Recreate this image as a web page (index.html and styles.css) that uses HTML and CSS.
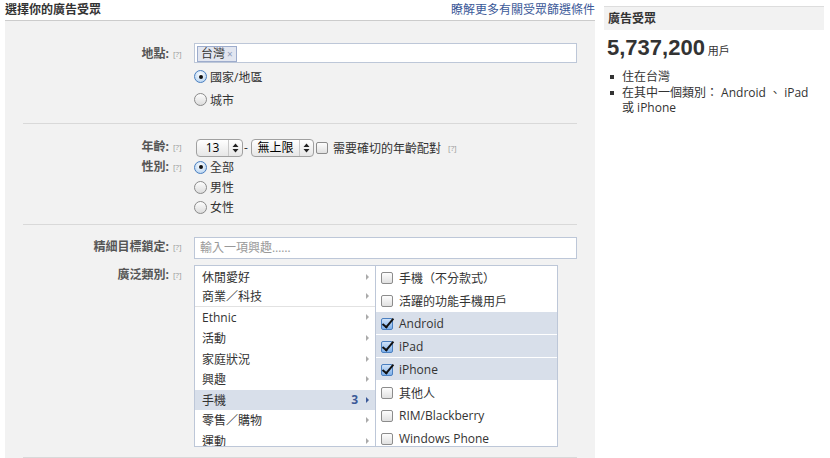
FILE: index.html
```html
<!DOCTYPE html>
<html lang="zh-Hant">
<head>
    <meta charset="UTF-8">
    <title>選擇你的廣告受眾</title>
    <link rel="stylesheet" href="styles.css">
</head>
<body>
    <div class="page">
        <!-- Targeting form -->
        <div class="main">
            <div class="main-head">
                <h2>選擇你的廣告受眾</h2>
                <a href="#">瞭解更多有關受眾篩選條件</a>
            </div>

            <div class="panel">
                <!-- Location -->
                <div class="section sec-location">
                    <div class="row">
                        <label class="label">地點:</label>
                        <span class="help">[?]</span>
                        <div class="control">
                            <div class="token-input">
                                <span class="token">台灣<span class="token-x">×</span></span>
                            </div>
                            <div class="radio-line"><span class="radio on"></span>國家/地區</div>
                            <div class="radio-line"><span class="radio"></span>城市</div>
                        </div>
                    </div>
                </div>

                <!-- Age / gender -->
                <div class="section sec-demo">
                    <div class="row row-age">
                        <label class="label">年齡:</label>
                        <span class="help">[?]</span>
                        <div class="control age-line">
                            <span class="select s-min">
                                <span class="select-val">13</span>
                                <span class="select-arrows">
                                    <svg width="7" height="10" viewBox="0 0 7 10"><path d="M3.5 0.5 L6.5 4 H0.5 Z M3.5 9.5 L6.5 6 H0.5 Z" fill="#222"/></svg>
                                </span>
                            </span>
                            <span class="dash">-</span>
                            <span class="select s-max">
                                <span class="select-val">無上限</span>
                                <span class="select-arrows">
                                    <svg width="7" height="10" viewBox="0 0 7 10"><path d="M3.5 0.5 L6.5 4 H0.5 Z M3.5 9.5 L6.5 6 H0.5 Z" fill="#222"/></svg>
                                </span>
                            </span>
                            <span class="check"></span>
                            <span class="exact">需要確切的年齡配對</span>
                            <span class="help help-inline">[?]</span>
                        </div>
                    </div>
                    <div class="row">
                        <label class="label">性別:</label>
                        <span class="help">[?]</span>
                        <div class="control">
                            <div class="radio-line tight"><span class="radio on"></span>全部</div>
                            <div class="radio-line tight"><span class="radio"></span>男性</div>
                            <div class="radio-line tight"><span class="radio"></span>女性</div>
                        </div>
                    </div>
                </div>

                <!-- Interests -->
                <div class="section sec-interest">
                    <div class="row">
                        <label class="label">精細目標鎖定:</label>
                        <span class="help">[?]</span>
                        <div class="control">
                            <div class="text-input">輸入一項興趣……</div>
                        </div>
                    </div>
                    <div class="row row-broad">
                        <label class="label">廣泛類別:</label>
                        <span class="help">[?]</span>
                        <div class="control">
                            <div class="category-box">
                                <ul class="cat-list">
                                    <li>休閒愛好<span class="arrow"></span></li>
                                    <li class="group-end">商業／科技<span class="arrow"></span></li>
                                    <li>Ethnic<span class="arrow"></span></li>
                                    <li>活動<span class="arrow"></span></li>
                                    <li>家庭狀況<span class="arrow"></span></li>
                                    <li>興趣<span class="arrow"></span></li>
                                    <li class="active">手機<span class="count">3</span><span class="arrow"></span></li>
                                    <li>零售／購物<span class="arrow"></span></li>
                                    <li>運動<span class="arrow"></span></li>
                                </ul>
                                <ul class="sub-list">
                                    <li><span class="check"></span>手機（不分款式）</li>
                                    <li><span class="check"></span>活躍的功能手機用戶</li>
                                    <li class="selected"><span class="check on"></span>Android</li>
                                    <li class="selected"><span class="check on"></span>iPad</li>
                                    <li class="selected"><span class="check on"></span>iPhone</li>
                                    <li><span class="check"></span>其他人</li>
                                    <li><span class="check"></span>RIM/Blackberry</li>
                                    <li><span class="check"></span>Windows Phone</li>
                                </ul>
                            </div>
                        </div>
                    </div>
                </div>
            </div>
        </div>

        <!-- Audience summary -->
        <div class="sidebar">
            <div class="side-head">廣告受眾</div>
            <div class="reach"><strong>5,737,200</strong> 用戶</div>
            <ul class="criteria">
                <li>住在台灣</li>
                <li>在其中一個類別： Android 、 iPad 或 iPhone</li>
            </ul>
        </div>
    </div>
</body>
</html>
```

FILE: styles.css
```css
/* Basic Reset */
* {
    margin: 0;
    padding: 0;
    box-sizing: border-box;
}

body {
    font-family: "Open Sans", "Noto Sans CJK TC", sans-serif;
    font-size: 12px;
    color: #333;
    background-color: #fff;
    width: 830px;
    height: 458px;
    overflow: hidden;
}

ul {
    list-style: none;
}

.page {
    display: flex;
    padding-left: 5px;
}

/* Main column */
.main {
    width: 590px;
}

.main-head {
    height: 20px;
    display: flex;
    justify-content: space-between;
    align-items: center;
}

.main-head h2 {
    font-size: 12px;
    font-weight: bold;
    color: #333;
    line-height: 16px;
}

.main-head a {
    color: #3b5998;
    text-decoration: none;
    line-height: 16px;
}

.panel {
    background-color: #f2f2f2;
    border-top: 1px solid #ccc;
    height: 460px;
}

.section {
    margin: 0 18px;
    border-bottom: 1px solid #d9d9d9;
}

.sec-location {
    padding: 23px 0 12px;
}

.sec-demo {
    padding: 13px 0 7px;
}

.sec-interest {
    padding: 12px 0 10px;
}

.row {
    display: grid;
    grid-template-columns: 146px 25px 383px;
    align-items: start;
}

.label {
    text-align: right;
    font-weight: bold;
    color: #555;
    line-height: 20px;
}

.help {
    font-size: 8px;
    color: #999;
    line-height: 20px;
    padding-left: 4px;
}

/* Location */
.token-input {
    height: 20px;
    background: #fff;
    border: 1px solid #bdc7d8;
    padding: 1px 2px;
    margin-top: -1px;
}

.token {
    display: inline-flex;
    align-items: center;
    height: 16px;
    padding: 0 3px;
    background-color: #e2e6f0;
    border: 1px solid #9daccc;
    color: #333;
    line-height: 14px;
}

.token-x {
    font-size: 10px;
    color: #8e9bb8;
    margin-left: 2px;
}

.radio-line {
    display: flex;
    align-items: center;
    height: 24px;
    padding-top: 3px;
    color: #333;
}

.radio-line + .radio-line {
    padding-top: 1px;
}

.radio-line.tight {
    height: 20px;
    padding-top: 0;
}

.radio {
    width: 13px;
    height: 13px;
    border-radius: 50%;
    border: 1px solid #8a8a8a;
    background: linear-gradient(#fdfdfd, #dcdcdc);
    margin-right: 3px;
    position: relative;
    flex-shrink: 0;
}

.radio.on {
    border-color: #4a7fc0;
    background: radial-gradient(circle at 50% 35%, #ffffff, #aaccef);
}

.radio.on::after {
    content: "";
    position: absolute;
    left: 3.5px;
    top: 3.5px;
    width: 4px;
    height: 4px;
    border-radius: 50%;
    background: #111;
}

/* Age */
.row-age .control {
    padding-top: 1px;
}

.age-line {
    display: flex;
    align-items: center;
    height: 20px;
}

.select {
    display: inline-flex;
    align-items: center;
    height: 18px;
    margin-left: 2px;
    border: 1px solid #a0a0a0;
    border-radius: 4px;
    background: linear-gradient(#ffffff, #e6e6e6);
    color: #000;
}

.s-min {
    width: 47px;
}

.s-max {
    width: 63px;
}

.select-val {
    flex: 1;
    text-align: center;
    line-height: 16px;
}

.select-arrows {
    width: 14px;
    height: 16px;
    border-left: 1px solid #c8c8c8;
    display: flex;
    align-items: center;
    justify-content: center;
}

.dash {
    width: 6px;
    text-align: center;
    color: #333;
}

.check {
    width: 12px;
    height: 12px;
    border: 1px solid #8c8c8c;
    border-radius: 2px;
    background: linear-gradient(#fdfdfd, #e0e0e0);
    flex-shrink: 0;
    position: relative;
}

.age-line .check {
    margin-left: 2px;
}

.check.on {
    border-color: #4a7fc0;
    background: linear-gradient(#cfe2f8, #7eb0ea);
}

.check.on::after {
    content: "";
    position: absolute;
    left: 3px;
    top: -3px;
    width: 4px;
    height: 10px;
    border: solid #111;
    border-width: 0 2px 2px 0;
    transform: rotate(40deg);
}

.exact {
    margin-left: 5px;
    color: #333;
}

.help-inline {
    padding-left: 7px;
}

/* Interests */
.text-input {
    height: 22px;
    background: #fff;
    border: 1px solid #bdc7d8;
    padding: 0 5px;
    line-height: 20px;
    color: #999;
}

.row-broad {
    margin-top: 6px;
}

.row-broad .label,
.row-broad .help {
    line-height: 20px;
}

.category-box {
    width: 364px;
    height: 182px;
    display: flex;
    background: #fff;
    border: 1px solid #bdc7d8;
    overflow: hidden;
}

.cat-list {
    width: 181px;
    border-right: 1px solid #bdc7d8;
}

.cat-list li {
    display: flex;
    align-items: center;
    height: 20.6px;
    padding: 0 6px 0 7px;
    color: #333;
}

.cat-list li:first-child {
    padding-top: 1px;
}

.cat-list li.group-end {
    border-bottom: 1px solid #e2e2e2;
}

.cat-list li.active {
    background-color: #d8dfea;
}

.arrow {
    margin-left: auto;
    width: 0;
    height: 0;
    border-top: 3px solid transparent;
    border-bottom: 3px solid transparent;
    border-left: 3px solid #aaa;
}

.count {
    margin-left: auto;
    margin-right: 8px;
    font-weight: bold;
    color: #3b5998;
}

.count + .arrow {
    margin-left: 0;
    border-left-color: #3b5998;
}

.sub-list {
    flex: 1;
}

.sub-list li {
    display: flex;
    align-items: center;
    height: 23px;
    padding-left: 5px;
    padding-top: 1px;
    border-bottom: 1px solid #fff;
    color: #333;
}

.sub-list li .check {
    margin-right: 6px;
}

.sub-list li.selected {
    background-color: #d8dfea;
}

/* Sidebar */
.sidebar {
    width: 220px;
    margin-left: 9px;
    margin-top: 6px;
}

.side-head {
    height: 24px;
    background-color: #f2f2f2;
    border-top: 1px solid #ddd;
    padding-left: 4px;
    font-weight: bold;
    color: #333;
    line-height: 24px;
}

.reach {
    padding: 5px 0 0 3px;
    font-size: 11px;
    line-height: 26px;
}

.reach strong {
    font-family: "Liberation Sans", sans-serif;
    font-size: 22px;
    color: #333;
}

.criteria {
    padding: 5px 14px 0 18px;
}

.criteria li {
    position: relative;
    line-height: 15.5px;
}

.criteria li::before {
    content: "";
    position: absolute;
    left: -12px;
    top: 6px;
    width: 4px;
    height: 4px;
    background: #333;
}
```
